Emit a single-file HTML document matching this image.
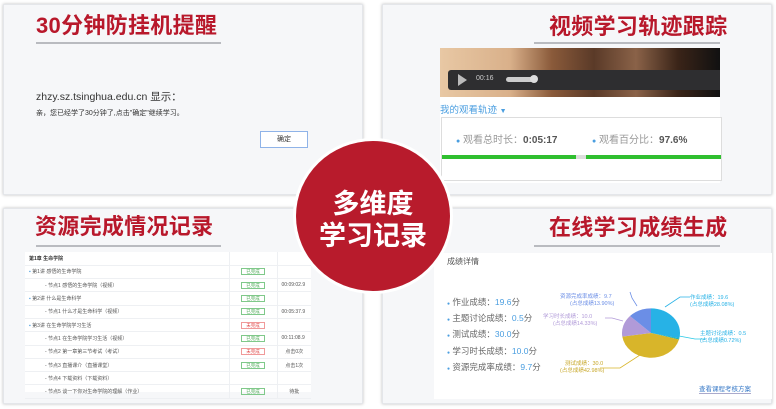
<!DOCTYPE html>
<html><head><meta charset="utf-8">
<style>
*{margin:0;padding:0;box-sizing:border-box}
body{width:776px;height:409px;background:#fff;position:relative;overflow:hidden;font-family:"Liberation Sans","Noto Sans CJK SC",sans-serif}
.card{position:absolute;background:#f6f7f9;box-shadow:0 0 3px rgba(0,0,0,.25);border:1px solid #e4e6ea}
.t{position:absolute;color:#b8182b;font-weight:bold;font-size:22px;letter-spacing:.3px;white-space:nowrap;line-height:1}
.ul{position:absolute;height:2px;background:#b9bbc0}
.abs{position:absolute;white-space:nowrap}
table{border-collapse:collapse}
td{height:13.3px;border-bottom:1px solid #eef0f3;font-size:5px;color:#555;padding:0 4px}
.tg{display:inline-block;border:1px solid #7fc98a;color:#4caa55;font-size:4.5px;padding:0 4px;line-height:5px}
.tr{border-color:#f09a9a;color:#e04646}
</style></head><body>

<div class="card" style="left:3px;top:4px;width:360px;height:191px"></div>
<div class="t" style="left:36px;top:15px">30分钟防挂机提醒</div>
<div class="ul" style="left:36px;top:42px;width:185px"></div>
<div class="abs" style="left:36px;top:89px;font-size:10.5px;color:#333">zhzy.sz.tsinghua.edu.cn 显示：</div>
<div class="abs" style="left:36px;top:108px;font-size:7px;color:#333">亲，您已经学了30分钟了,点击"确定"继续学习。</div>
<div class="abs" style="left:260px;top:131px;width:48px;height:17px;border:1px solid #8fb3e8;background:#fff;font-size:7px;text-align:center;line-height:15px;color:#333">确定</div>

<div class="card" style="left:382px;top:4px;width:390px;height:191px"></div>
<div class="t" style="left:549px;top:16px">视频学习轨迹跟踪</div>
<div class="ul" style="left:534px;top:42px;width:186px"></div>
<div class="abs" style="left:440px;top:48px;width:280px;height:49px;background:linear-gradient(90deg,#e8c8a4 0%,#d9b08a 25%,#8a5a3a 40%,#5a3a28 55%,#8a6248 70%,#3a2418 85%,#111 100%)"></div>
<div class="abs" style="left:448px;top:70px;width:272px;height:20px;background:#2e2e30;border-radius:3px 0 0 3px"></div>
<div class="abs" style="left:458px;top:74px;width:0;height:0;border-left:9px solid #bbb;border-top:6px solid transparent;border-bottom:6px solid transparent"></div>
<div class="abs" style="left:476px;top:75px;font-size:7px;color:#ccc">00:16</div>
<div class="abs" style="left:506px;top:77px;width:30px;height:5px;background:#ccc;border-radius:3px"></div>
<div class="abs" style="left:530px;top:75px;width:8px;height:8px;background:#ddd;border-radius:50%"></div>
<div class="abs" style="left:440px;top:97px;width:280px;height:86px;background:#fff"></div>
<div class="abs" style="left:440px;top:102px;font-size:9.5px;color:#4a9ee0">我的观看轨迹 <span style="font-size:7px">▼</span></div>
<div class="abs" style="left:441px;top:117px;width:281px;height:64px;border:1px solid #ddd;background:#fff"></div>
<div class="abs" style="left:456px;top:131px;font-size:10px;color:#999"><span style="color:#4a9ee0;font-size:7px">●</span> 观看总时长：<b style="color:#555">0:05:17</b></div>
<div class="abs" style="left:592px;top:131px;font-size:10px;color:#999"><span style="color:#4a9ee0;font-size:7px">●</span> 观看百分比：<b style="color:#555">97.6%</b></div>
<div class="abs" style="left:442px;top:155px;width:134px;height:4px;background:#2fbf2f"></div>
<div class="abs" style="left:576px;top:155px;width:10px;height:4px;background:#ddd"></div>
<div class="abs" style="left:586px;top:155px;width:135px;height:4px;background:#2fbf2f"></div>

<div class="card" style="left:3px;top:208px;width:360px;height:196px"></div>
<div class="t" style="left:35px;top:216px">资源完成情况记录</div>
<div class="ul" style="left:36px;top:245px;width:185px"></div>
<div class="abs" style="left:25px;top:252px;width:286px;height:140px;background:#fff">
<table style="width:286px">
<tr><td style="width:204px;font-weight:bold;color:#333">第1章 生命学院</td><td style="width:48px;border-left:1px solid #eef0f3"></td><td style="border-left:1px solid #eef0f3"></td></tr>
<tr><td><span style="color:#4a9ee0">▪</span> 第1讲 感悟的生命学院</td><td style="text-align:center;border-left:1px solid #eef0f3"><span class="tg">已完成</span></td><td style="border-left:1px solid #eef0f3"></td></tr>
<tr><td style="padding-left:20px">- 节点1 感悟的生命学院（视频）</td><td style="text-align:center;border-left:1px solid #eef0f3"><span class="tg">已完成</span></td><td style="border-left:1px solid #eef0f3">00:09:02.9</td></tr>
<tr><td><span style="color:#4a9ee0">▪</span> 第2讲 什么是生命科学</td><td style="text-align:center;border-left:1px solid #eef0f3"><span class="tg">已完成</span></td><td style="border-left:1px solid #eef0f3"></td></tr>
<tr><td style="padding-left:20px">- 节点1 什么才是生命科学（视频）</td><td style="text-align:center;border-left:1px solid #eef0f3"><span class="tg">已完成</span></td><td style="border-left:1px solid #eef0f3">00:05:37.9</td></tr>
<tr><td><span style="color:#4a9ee0">▪</span> 第3讲 在生命学院学习生活</td><td style="text-align:center;border-left:1px solid #eef0f3"><span class="tg tr">未完成</span></td><td style="border-left:1px solid #eef0f3"></td></tr>
<tr><td style="padding-left:20px">- 节点1 在生命学院学习生活（视频）</td><td style="text-align:center;border-left:1px solid #eef0f3"><span class="tg">已完成</span></td><td style="border-left:1px solid #eef0f3">00:11:08.9</td></tr>
<tr><td style="padding-left:20px">- 节点2 第一章第三节考试（考试）</td><td style="text-align:center;border-left:1px solid #eef0f3"><span class="tg tr">未完成</span></td><td style="border-left:1px solid #eef0f3;text-align:center">点击0次</td></tr>
<tr><td style="padding-left:20px">- 节点3 直播课介（直播课堂）</td><td style="text-align:center;border-left:1px solid #eef0f3"><span class="tg">已完成</span></td><td style="border-left:1px solid #eef0f3;text-align:center">点击1次</td></tr>
<tr><td style="padding-left:20px">- 节点4 下载资料（下载资料）</td><td style="border-left:1px solid #eef0f3"></td><td style="border-left:1px solid #eef0f3"></td></tr>
<tr><td style="padding-left:20px">- 节点5 谈一下你对生命学院的理解（作业）</td><td style="text-align:center;border-left:1px solid #eef0f3"><span class="tg">已完成</span></td><td style="border-left:1px solid #eef0f3;text-align:center">待批</td></tr>
</table></div>

<div class="card" style="left:382px;top:208px;width:390px;height:196px"></div>
<div class="t" style="left:549px;top:217px">在线学习成绩生成</div>
<div class="ul" style="left:534px;top:245px;width:186px"></div>
<div class="abs" style="left:434px;top:253px;width:338px;height:146px;background:#fff"></div>
<div class="abs" style="left:447px;top:256px;font-size:8px;color:#555">成绩详情</div>
<div class="abs" style="left:447px;top:295px;font-size:8.5px;color:#666;line-height:14.2px">
<div><span style="color:#4a9ee0;font-size:5px">●</span> 作业成绩：<span style="color:#4a9ee0">19.6</span>分</div>
<div><span style="color:#4a9ee0;font-size:5px">●</span> 主题讨论成绩：<span style="color:#4a9ee0">0.5</span>分</div>
<div><span style="color:#4a9ee0;font-size:5px">●</span> 测试成绩：<span style="color:#4a9ee0">30.0</span>分</div>
<div><span style="color:#4a9ee0;font-size:5px">●</span> 学习时长成绩：<span style="color:#4a9ee0">10.0</span>分</div>
<div><span style="color:#4a9ee0;font-size:5px">●</span> 资源完成率成绩：<span style="color:#4a9ee0">9.7</span>分</div>
</div>
<svg class="abs" style="left:540px;top:285px" width="236" height="90" viewBox="540 285 236 90">
<g transform="translate(651,333) scale(1,0.85)">
<path d="M0 0 L0 -29 A29 29 0 0 1 28.3 6.3 Z" fill="#27b2e6"/>
<path d="M0 0 L28.3 6.3 A29 29 0 0 1 28 7.7 Z" fill="#1ab0b0"/>
<path d="M0 0 L28 7.7 A29 29 0 0 1 -28.7 4.3 Z" fill="#d8b52a"/>
<path d="M0 0 L-28.7 4.3 A29 29 0 0 1 -21 -20 Z" fill="#b19ad8"/>
<path d="M0 0 L-21 -20 A29 29 0 0 1 0 -29 Z" fill="#6b8ee6"/>
</g>
<g fill="none" stroke-width="0.8">
<polyline points="665,307 680,297 690,297" stroke="#27b2e6"/>
<polyline points="679,336 695,339 705,339" stroke="#27c8e6"/>
<polyline points="640,355 620,368 600,368" stroke="#d8b52a"/>
<polyline points="623,321 612,318 605,318" stroke="#b19ad8"/>
<polyline points="637,306 632,298 630,292" stroke="#6b8ee6"/>
</g>
<g font-size="5.5" font-family="Liberation Sans,Noto Sans CJK SC,sans-serif">
<text x="690" y="299" fill="#27b2e6">作业成绩：19.6</text><text x="690" y="306" fill="#27b2e6">(占总成绩28.08%)</text>
<text x="700" y="335" fill="#27b2e6">主题讨论成绩：0.5</text><text x="700" y="342" fill="#27b2e6">(占总成绩0.72%)</text>
<text x="565" y="365" fill="#c8a82a">测试成绩：30.0</text><text x="560" y="372" fill="#c8a82a">(占总成绩42.98%)</text>
<text x="543" y="318" fill="#b19ad8">学习时长成绩：10.0</text><text x="553" y="325" fill="#b19ad8">(占总成绩14.33%)</text>
<text x="560" y="298" fill="#6b8ee6">资源完成率成绩：9.7</text><text x="570" y="305" fill="#6b8ee6">(占总成绩13.90%)</text>
</g></svg>
<div class="abs" style="left:699px;top:383px;font-size:6.5px;color:#3a7bc8;border-bottom:1px solid #aac">查看课程考核方案</div>

<div class="abs" style="left:296px;top:141px;width:154px;height:150px;border-radius:50%;background:#b81b2c;box-shadow:0 0 0 3px #fff"></div>
<div class="abs" style="left:296px;top:188px;width:154px;text-align:center;color:#fff;font-weight:bold;font-size:27px;line-height:32px">多维度<br>学习记录</div>
</body></html>
